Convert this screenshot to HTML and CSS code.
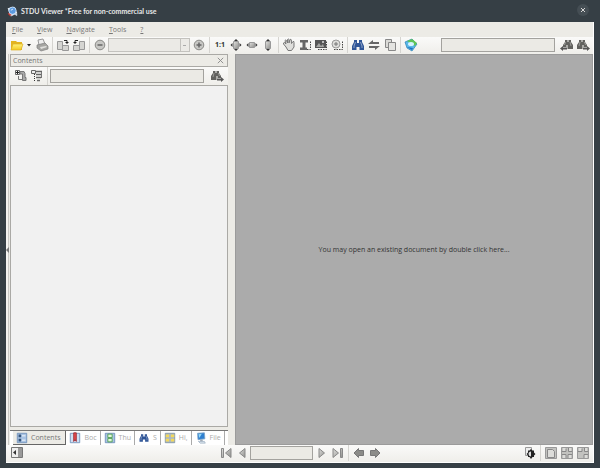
FILE: index.html
```
<!DOCTYPE html>
<html lang="en">
<head>
  <meta charset="UTF-8">
  <meta name="viewport" content="width=device-width, initial-scale=1.0">
  <title>STDU Viewer</title>
  <link rel="stylesheet" href="styles.css">
</head>
<body>
  <svg class="defs" aria-hidden="true">
    <defs>
      <linearGradient id="steel" x1="0" y1="0" x2="1" y2="1">
        <stop offset="0" stop-color="#e0e0de"/>
        <stop offset="1" stop-color="#90908d"/>
      </linearGradient>
      <linearGradient id="gold" x1="0" y1="0" x2="0" y2="1">
        <stop offset="0" stop-color="#fff27a"/>
        <stop offset="1" stop-color="#f3c822"/>
      </linearGradient>
      <symbol id="binoculars" viewBox="0 0 16 16">
        <path fill="currentColor" d="M4 3h3v3h2V3h3v2l2 4v4H9.500v-3h-3v3H2V9l2-4z"/>
        <path stroke="#fff" stroke-opacity=".45" d="M5.500 5 4 9v2M10.500 5 12 9v2" fill="none"/>
      </symbol>
      <symbol id="find-next" viewBox="0 0 16 16">
        <path fill="#62625f" d="M4 3h2.500v2h1V3H10v2l2 3v2H8.500V8h-1v4H2V8l2-3z"/>
        <path stroke="#b5b5b2" stroke-width=".7" d="M5 5 4 9M9.500 5l1 3" fill="none"/>
        <path fill="#555" d="M8 10.500h4V9l3 2.500-3 2.500v-1.500H8z"/>
      </symbol>
      <symbol id="find-prev" viewBox="0 0 16 16">
        <path fill="#62625f" d="M12 3H9.500v2h-1V3H6v2L4 8v2h3.500V8h1v4H14V8l-2-3z"/>
        <path stroke="#b5b5b2" stroke-width=".7" d="m11 5 1 4M6.500 5l-1 3" fill="none"/>
        <path fill="#555" d="M8 10.500H4V9l-3 2.500L4 14v-1.500h4z"/>
      </symbol>
      <symbol id="marquee" viewBox="0 0 16 16">
        <path d="M5 12.500h8.500V4" fill="none" stroke="#444" stroke-dasharray="1.500 1"/>
      </symbol>
    </defs>
  </svg>

  <div class="window">
    <header class="titlebar">
      <svg class="icon" viewBox="0 0 16 16">
        <path fill="#e8eef4" d="m2 4 8-2 4 8-8 4z"/>
        <path fill="#d33b31" d="M2 10h4l1 3H4z"/>
        <circle cx="8" cy="7" r="4.500" fill="#5c9be0" stroke="#d6e8fa"/>
        <path stroke="#c9d7e6" stroke-width="2" d="m11 10 2.500 3"/>
        <path stroke="#fff" d="M6 6.500 8.500 5" fill="none"/>
      </svg>
      <h1 class="title">STDU Viewer *Free for non-commercial use</h1>
      <button class="close" aria-label="Close window"><svg viewBox="0 0 12 12"><path d="m4 4 4 4M8 4 4 8"/></svg></button>
    </header>

    <div class="client">
      <nav class="menu">
        <button><u>F</u>ile</button>
        <button><u>V</u>iew</button>
        <button><u>N</u>avigate</button>
        <button><u>T</u>ools</button>
        <button><u>?</u></button>
      </nav>

      <div class="toolbar">
        <button class="tool" aria-label="Open"><svg class="icon" viewBox="0 0 16 16"><path fill="#e3b420" d="M2 4h5l1 1h5v8H2z"/><path fill="url(#gold)" stroke="#dcb02a" stroke-width=".7" d="M2 13 4 7h10l-2 6z"/></svg></button>
        <button class="drop" aria-label="Recent files"><svg viewBox="0 0 9 16"><path fill="#222" d="M2 7h4L4 9.500z"/></svg></button>
        <button class="tool" aria-label="Print"><svg class="icon" viewBox="0 0 16 16"><path fill="#eee" stroke="#999" d="m5 8-1-5 5-1 2 5"/><path fill="#a5a5a2" stroke="#808080" stroke-width=".7" d="m3 8 8-2 3 3v3l-7 2-4-3z"/><path fill="#e0e0dd" d="m6 10 6-1 1 1-6 2z"/></svg></button>
        <span class="sep"></span>
        <button class="tool" aria-label="Rotate right"><svg class="icon" viewBox="0 0 16 16"><path fill="#d5d5d2" stroke="#999" d="M2.500 4.500h5v8h-5zM7.500 8.500h6v5h-6z"/><path fill="none" stroke="#222" d="M9 3.500h3v2"/><path fill="#222" d="M10 5h4l-2 2z"/></svg></button>
        <button class="tool" aria-label="Rotate left"><svg class="icon" viewBox="0 0 16 16"><path fill="#d5d5d2" stroke="#999" d="M8.500 4.500h5v8h-5zM2.500 8.500h6v5h-6z"/><path fill="none" stroke="#222" d="M7 3.500H4v2"/><path fill="#222" d="M6 5H2l2 2z"/></svg></button>
        <span class="sep"></span>
        <button class="tool" aria-label="Zoom out"><svg class="icon" viewBox="0 0 16 16"><circle cx="8" cy="8" r="4.800" fill="#c7c7c4" stroke="#8a8a87"/><path stroke="#666" stroke-width="1.500" d="M5.500 8h5"/></svg></button>
        <select class="zoom" aria-label="Zoom level" disabled></select>
        <button class="tool" aria-label="Zoom in"><svg class="icon" viewBox="0 0 16 16"><circle cx="8" cy="8" r="4.800" fill="#c7c7c4" stroke="#8a8a87"/><path stroke="#666" stroke-width="1.500" d="M5.500 8h5M8 5.500v5"/></svg></button>
        <span class="sep"></span>
        <button class="tool actual">1:1</button>
        <button class="tool" aria-label="Fit page"><svg class="icon" viewBox="0 0 16 16"><path fill="url(#steel)" stroke="#999" d="M5.500 4.500h5v7h-5z"/><path fill="#333" d="m8 2 2 2H6zM8 14l2-2H6zM2.500 8l2-2v4zM13.500 8l-2-2v4z"/></svg></button>
        <button class="tool" aria-label="Fit width"><svg class="icon" viewBox="0 0 16 16"><path fill="url(#steel)" stroke="#999" d="M5.500 5.500h5v5h-5z"/><path fill="#333" d="m2.500 8 2-2v4zM13.500 8l-2-2v4z"/></svg></button>
        <button class="tool" aria-label="Fit height"><svg class="icon" viewBox="0 0 16 16"><path fill="url(#steel)" stroke="#999" d="M5.500 4.500h5v7h-5z"/><path fill="#333" d="m8 2 2 2H6zM8 14l2-2H6z"/></svg></button>
        <span class="sep"></span>
        <button class="tool" aria-label="Hand"><svg class="icon" viewBox="0 0 16 16"><path fill="#dededb" stroke="#777" d="M5 10 2.500 7q-.2-1.500 1-1.500L5 7 4 3.500q.7-1 1.500 0L6.500 6V2.500q1-1 1.500 0V6l1-3.500q1-.6 1.300.4L10.500 6.500l1.500-2q1.300-.4 1 1L13 10l-2.500 3.500H7z"/></svg></button>
        <button class="tool" aria-label="Select text"><svg class="icon" viewBox="0 0 16 16"><use href="#marquee"/><path fill="#666" d="M3 3h8v2.500H8.500v5H10V13H3v-2.500h2.500v-5H3z"/></svg></button>
        <button class="tool" aria-label="Select image"><svg class="icon" viewBox="0 0 16 16"><path fill="#555" d="M2 3h11v8H2z"/><path fill="#a5a5a2" d="m3 10 3-4 2 3 2-2 1 3z"/><circle cx="10" cy="5" r="1" fill="#ddd"/><use href="#marquee"/></svg></button>
        <button class="tool" aria-label="Zoom to selection"><svg class="icon" viewBox="0 0 16 16"><use href="#marquee"/><circle cx="7" cy="7" r="4" fill="#ddddda" stroke="#999"/><path stroke="#777" d="M5 7h4M7 5v4"/></svg></button>
        <span class="sep"></span>
        <button class="tool blue" aria-label="Find"><svg class="icon"><use href="#binoculars"/></svg></button>
        <button class="tool" aria-label="Swap"><svg class="icon" viewBox="0 0 16 16"><path fill="#666" d="M7 3v2h6v2H2zM9 13v-2H3V9h11z"/></svg></button>
        <button class="tool" aria-label="Copy"><svg class="icon" viewBox="0 0 16 16"><path fill="#dadad7" stroke="#888" d="M3.500 2.500h6v8h-6z"/><path fill="#e4e4e1" stroke="#888" d="M6.500 5.500h7v8h-7z"/></svg></button>
        <span class="sep"></span>
        <button class="tool" aria-label="Web site"><svg class="icon" viewBox="0 0 16 16"><path fill="#58b8e8" stroke="#2d7fb5" stroke-width=".7" d="m2 5 7-3 5 5-5 7-5-3z"/><path fill="#5fc557" d="m4 4 5-2 5 4-2 3z"/><ellipse cx="8" cy="7" rx="3" ry="2" fill="#d5f3ff"/><path fill="#1e6ec0" d="m4 10 6 1-1 2z"/></svg></button>
        <span class="spacer"></span>
        <input class="field search" type="text" aria-label="Search document">
        <button class="tool" aria-label="Find previous"><svg class="icon"><use href="#find-prev"/></svg></button>
        <button class="tool" aria-label="Find next"><svg class="icon"><use href="#find-next"/></svg></button>
      </div>

      <main class="work">
        <div class="splitter"></div>
        <aside class="panel">
          <div class="panel-header">
            <h2>Contents</h2>
            <button aria-label="Close panel"><svg viewBox="0 0 10 10"><path d="m2 2 6 6M8 2 2 8"/></svg></button>
          </div>
          <div class="panel-tools">
            <button class="tool" aria-label="Expand"><svg class="icon" viewBox="0 0 16 16"><path fill="#eee" stroke="#666" d="M2.500 2.500h4v4h-4z"/><path stroke="#222" d="M3 4.500h3M4.500 3v3"/><path fill="#aaa" stroke="#777" d="M7 3.500h4l1 2v4h1v3H9.500V6H7z"/><path stroke="#777" d="M5.500 8v3.500H9" fill="none"/></svg></button>
            <button class="tool" aria-label="Collapse"><svg class="icon" viewBox="0 0 16 16"><path fill="#eee" stroke="#666" d="M2.500 2.500h4v3h-4z"/><path stroke="#666" d="M7 3.500h6M7 6.500h6M7 9.500h5M8 12.500h3" stroke-width="1.500"/><path stroke="#333" stroke-dasharray="1 1" d="M5.500 6v7"/><path stroke="#777" d="M12.500 4v6" fill="none"/></svg></button>
            <span class="sep"></span>
            <input class="field" type="text" aria-label="Search contents">
            <button class="tool" aria-label="Find in contents"><svg class="icon"><use href="#find-next"/></svg></button>
          </div>
          <div class="tree"></div>
          <div class="tabs" role="tablist">
            <button class="tab active" role="tab" aria-selected="true"><svg class="icon" viewBox="0 0 14 14"><path fill="#a9c3e4" stroke="#6d8fb8" d="M1.500 1.500h11v11h-11z"/><path fill="#36557c" d="M3 3h3v3H3zM3 8h3v3H3z"/><path stroke="#fff" d="M7 4.500h4M7 9.500h4"/></svg><span>Contents</span></button>
            <button class="tab" role="tab"><svg class="icon" viewBox="0 0 14 14"><path fill="#cfdff3" stroke="#6d8fb8" d="M1.500 1.500h11v11h-11z"/><path fill="#e34a4e" stroke="#9c2930" d="M5.500 1v10L7 9l1.500 2V1z"/></svg><span>Boc</span></button>
            <button class="tab" role="tab"><svg class="icon" viewBox="0 0 14 14"><path fill="#a9c3e4" stroke="#6d8fb8" d="M1.500 1.500h11v11h-11z"/><path fill="#e3f8d9" stroke="#4b9e4b" d="M4.500 2.500h5v4h-5zM4.500 7.500h5v4h-5z"/></svg><span>Thu</span></button>
            <button class="tab" role="tab"><svg class="icon blue"><use href="#binoculars"/></svg><span>S</span></button>
            <button class="tab" role="tab"><svg class="icon" viewBox="0 0 14 14"><path fill="#a9b9c6" stroke="#7f93a5" d="M1.500 1.500h11v11h-11z"/><path fill="#f2d75c" d="M2 3h4v3H2zM8 3h4v3H8zM2 8h4v3H2zM8 8h4v3H8z"/></svg><span>Hi,</span></button>
            <button class="tab" role="tab"><svg class="icon" viewBox="0 0 14 14"><path fill="#2f7fd0" stroke="#7ba5ca" d="M3 1.500 11 1l.5 7-8 1z"/><path fill="#93d9f8" d="m4 2.500 4-.5-3 5z"/><path fill="#a5adb5" d="M6 9h3v2H6z"/><path fill="#dde6ef" stroke="#8aa0b5" stroke-width=".7" d="M4 11h7l1 2H6z"/></svg><span>File</span></button>
          </div>
        </aside>
        <section class="document">
          <p>You may open an existing document by double click here...</p>
        </section>
      </main>

      <footer class="status">
        <div class="status-side">
          <button class="tool" aria-label="Toggle panel"><svg class="icon" viewBox="0 0 16 16"><path fill="#eee" stroke="#777" d="M2.500 3.500h11v10h-11z"/><path fill="#999" d="M9 4h4v9H9z"/><path fill="#333" d="M4 8.500 7 6v5z"/></svg></button>
        </div>
        <button class="tool" aria-label="First page"><svg class="icon" viewBox="0 0 16 16"><path fill="url(#steel)" stroke="#888" d="M3.500 3.500h2v9h-2zM13 3.500v9L7.500 8z"/></svg></button>
        <button class="tool" aria-label="Previous page"><svg class="icon" viewBox="0 0 16 16"><path fill="url(#steel)" stroke="#888" d="M11 3.500v9L5.500 8z"/></svg></button>
        <input class="field page" type="text" aria-label="Page number">
        <button class="tool" aria-label="Next page"><svg class="icon" viewBox="0 0 16 16"><path fill="url(#steel)" stroke="#888" d="M5 3.500v9L10.500 8z"/></svg></button>
        <button class="tool" aria-label="Last page"><svg class="icon" viewBox="0 0 16 16"><path fill="url(#steel)" stroke="#888" d="M10.500 3.500h2v9h-2zM3 3.500v9L8.500 8z"/></svg></button>
        <span class="sep"></span>
        <button class="tool" aria-label="Back"><svg class="icon" viewBox="0 0 16 16"><path fill="#8c8c89" stroke="#777" d="M7.500 3.500v2h5v5h-5v2L3 8z"/></svg></button>
        <button class="tool" aria-label="Forward"><svg class="icon" viewBox="0 0 16 16"><path fill="#8c8c89" stroke="#777" d="M8.500 3.500v2h-5v5h5v2L13 8z"/></svg></button>
        <span class="spacer"></span>
        <button class="tool" aria-label="Contrast"><svg class="icon" viewBox="0 0 16 16"><path fill="#eee" stroke="#999" d="M3.500 2.500h6v8h-6z"/><path fill="#222" d="m9 4 1.500 1.500H12v2l1.500 1.500L12 10.500V12h-1.500L9 14l-1.500-2H6v-1.500L4.500 9 6 7.500v-2h1.500z"/><path fill="#ddd" d="M9 6.500a2.500 2.500 0 0 0 0 5z"/></svg></button>
        <span class="sep"></span>
        <button class="tool" aria-label="Single page"><svg class="icon" viewBox="0 0 16 16"><path fill="#c2c2bf" stroke="#999" d="M2.500 2.500h11v11h-11z"/><path fill="#dcdcd9" stroke="#888" d="M4.500 4.500h5l2 2v6h-7z"/></svg></button>
        <button class="tool" aria-label="Continuous"><svg class="icon" viewBox="0 0 16 16"><path fill="#c2c2bf" stroke="#999" d="M2.500 2.500h11v11h-11z"/><path fill="#dcdcd9" d="M4 3h3v3H4zM9 3h3v3H9zM4 10h3v3H4zM9 10h3v3H9z"/><path fill="none" stroke="#888" d="M3 6.500h4v-3M13 9.500H9V13M9.500 3v3.500H13M3 9.500h4V13"/></svg></button>
        <button class="tool" aria-label="Facing pages"><svg class="icon" viewBox="0 0 16 16"><path fill="#c2c2bf" stroke="#999" d="M2.500 2.500h11v11h-11z"/><path fill="#dcdcd9" d="M4 3h3v3H4zM9 3h3v3H9zM9 10h3v3H9z"/><path fill="none" stroke="#888" d="M3 6.500h4v-3M13 9.500H9V13M9.500 3v3.500H13"/></svg></button>
      </footer>
    </div>
  </div>
</body>
</html>
```
FILE: styles.css
```
* {
  box-sizing: border-box;
}

body {
  margin: 0;
  background: #363f45;
  color: #777;
  font-family: "Open Sans", "Noto Sans", sans-serif;
  font-size: 7px;
  line-height: 10px;
}

button,
input,
select {
  margin: 0;
  padding: 0;
  border: 0;
  background: none;
  color: inherit;
  font: inherit;
}

svg {
  display: block;
}

h1,
h2,
p {
  margin: 0;
  font-size: inherit;
}

.defs {
  position: absolute;
  width: 0;
  height: 0;
}

.window {
  display: flex;
  flex-direction: column;
  height: 100vh;
  padding: 0 6px 5px;
}

/* title bar */
.titlebar {
  display: flex;
  flex: none;
  align-items: center;
  height: 22px;
  color: #e8e8e8;
}

.titlebar .icon {
  width: 13px;
  height: 13px;
  margin-right: 2px;
}

.title {
  flex: 1;
  font-family: Lato, sans-serif;
  font-weight: 700;
}

.close {
  width: 12px;
  height: 12px;
  margin: 0 5px 2px 0;
  border-radius: 50%;
  background: #454e54;
}

.close path {
  stroke: #d5d5d5;
}

.client {
  display: flex;
  flex: 1;
  flex-direction: column;
  min-height: 0;
  border-right: 1px solid #fff;
  border-bottom: 1px solid #fff;
  background: #ecebe6;
}

/* menu */
.menu {
  display: flex;
  flex: none;
  gap: 14px;
  height: 15px;
  padding-left: 6px;
}

/* toolbars */
.toolbar,
.status {
  display: flex;
  flex: none;
  align-items: center;
  height: 17px;
  padding: 0 2px 1px 3px;
  background: linear-gradient(#fafaf9, #efeeea);
}

.tool {
  flex: none;
  width: 16px;
  height: 16px;
}

.tool .icon {
  width: 16px;
  height: 16px;
}

.blue {
  color: #2f5597;
}

.drop {
  width: 9px;
}

.actual {
  color: #333;
  font-weight: 700;
}

.sep {
  flex: none;
  align-self: stretch;
  width: 1px;
  margin: 0 2px;
  background: #d5d4d0;
}

.spacer {
  flex: 1;
}

.zoom {
  width: 82px;
  height: 14px;
  margin-right: 1px;
  appearance: none;
  border: 1px solid #c3c2be;
  border-radius: 0;
  opacity: 1;
  background:
    linear-gradient(#aaa, #aaa) right 3px center / 3px 1px no-repeat,
    linear-gradient(#c3c2be, #c3c2be) right 8px center / 1px 100% no-repeat,
    #ebeae6;
}

.field {
  height: 14px;
  border: 1px solid #a3a29e;
  background: #ebeae5;
}

.search {
  width: 114px;
  margin-right: 4px;
}

/* work area */
.work {
  display: flex;
  flex: 1;
  min-height: 0;
}

.splitter {
  display: flex;
  align-items: center;
  width: 3px;
  border-right: 1px solid #c9c8c4;
  background: #f4f3f0;
}

.splitter::before {
  content: "";
  border: 3px solid transparent;
  border-left: 0;
  border-right-color: #777;
}

.panel {
  display: flex;
  flex: 0 0 38%;
  flex-direction: column;
  min-width: 0;
  padding: 0 4px 0 1px;
}

.panel-header {
  display: flex;
  justify-content: space-between;
  align-items: center;
  height: 13px;
  padding: 0 2px;
  border: 1px solid #aaa9a5;
}

.panel-header h2 {
  font-weight: 400;
}

.panel-header button {
  width: 9px;
  height: 9px;
}

.panel-header path {
  stroke: #888;
}

.panel-tools {
  display: flex;
  align-items: center;
  height: 18px;
  padding: 0 3px;
  background: linear-gradient(#fafaf9, #efeeea);
}

.panel-tools .field {
  flex: 1;
  min-width: 0;
  margin-right: 5px;
}

.tree {
  flex: 1;
  border: 1px solid #aaa9a5;
  background: #f1f1f1;
}

/* panel tabs */
.tabs {
  display: flex;
  height: 15px;
  margin-top: 3px;
  padding-left: 3px;
  border-top: 1px solid #777;
  background: #fff;
  color: #aaa;
}

.tab {
  display: flex;
  flex: 0 1 auto;
  align-items: center;
  gap: 3px;
  padding: 0 3px;
  border-right: 1px solid #aaa;
}

.tab .icon {
  flex: none;
  width: 12px;
  height: 12px;
}

.tab.active {
  padding-right: 5px;
  border-right-color: #666;
  border-bottom: 1px solid #666;
  background: #ecebe6;
  color: #777;
}

.document {
  display: flex;
  flex: 1;
  align-items: center;
  justify-content: center;
  margin-left: 3px;
  border: 1px solid #9b9b9b;
  background: #ababab;
  color: #333;
}

.status-side {
  flex: 0 0 calc(36% - 1px);
}

.page {
  width: 63px;
  margin-right: 1px;
}
```
